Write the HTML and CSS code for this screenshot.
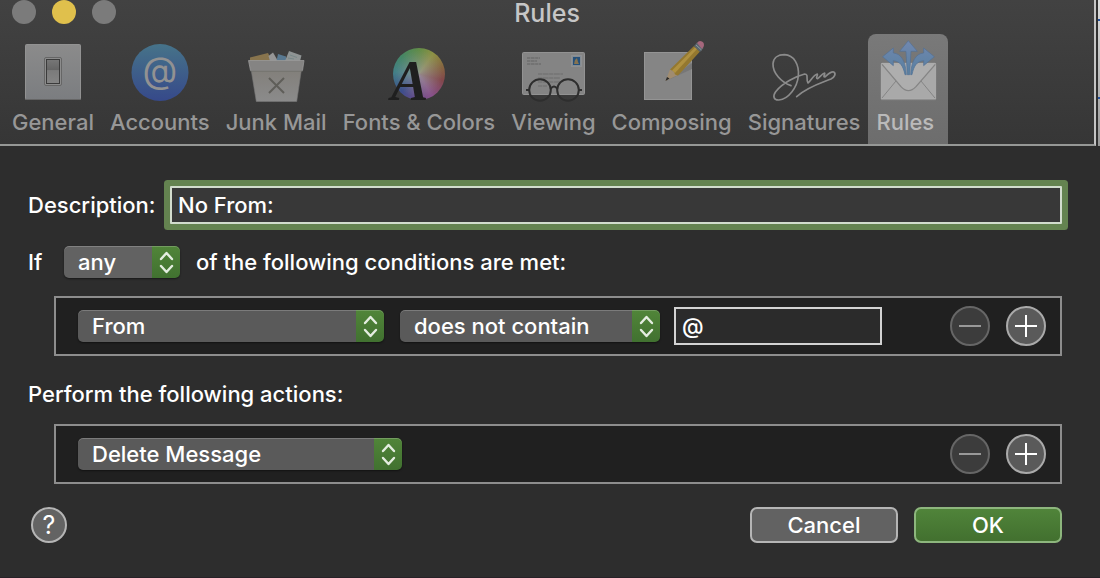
FILE: index.html
```html
<!DOCTYPE html>
<html lang="en">
<head>
  <meta charset="UTF-8">
  <meta name="viewport" content="width=device-width, initial-scale=1.0">
  <title>Rules</title>
  <link rel="stylesheet" href="styles.css">
</head>
<body>
<div class="top">
  <header class="window-header">
    <div class="titlebar">
      <div class="lights">
        <button class="light" aria-label="Close"></button>
        <button class="light minimize" aria-label="Minimize"></button>
        <button class="light" aria-label="Zoom"></button>
      </div>
      <h1>Rules</h1>
    </div>
    <nav class="toolbar">
      <button class="tab">
        <svg viewBox="0 0 64 64" aria-hidden="true">
          <defs>
            <linearGradient id="plate" x2="0" y2="1"><stop stop-color="#8b8b8b"/><stop offset="1" stop-color="#7b7d80"/></linearGradient>
            <linearGradient id="rocker" x2="0" y2="1"><stop stop-color="#777"/><stop offset=".44" stop-color="#656565"/><stop offset=".46" stop-color="#7b7b7b"/><stop offset="1" stop-color="#858585"/></linearGradient>
          </defs>
          <rect x="4.500" y="4.500" width="55" height="55" rx="1" fill="url(#plate)" stroke="#929292"/>
          <path d="M4 59.500h56" stroke="#666"/>
          <rect x="23.500" y="17.500" width="17" height="28" rx="1.500" fill="#8c8c8c" stroke="#666"/>
          <rect x="25.500" y="19.500" width="13" height="24" fill="url(#rocker)" stroke="#3b3b3b"/>
        </svg>
        <span>General</span>
      </button>
      <button class="tab">
        <svg viewBox="0 0 64 64" aria-hidden="true">
          <defs><linearGradient id="blue" x2="0" y2="1"><stop stop-color="#467389"/><stop offset="1" stop-color="#36498a"/></linearGradient></defs>
          <circle cx="32" cy="32.500" r="28.500" fill="url(#blue)"/>
          <text class="at" x="32" y="43" text-anchor="middle">@</text>
        </svg>
        <span>Accounts</span>
      </button>
      <button class="tab">
        <svg viewBox="0 0 64 64" aria-hidden="true">
          <defs><linearGradient id="bin" x2="0" y2="1"><stop stop-color="#827f7a"/><stop offset="1" stop-color="#8b8b8b"/></linearGradient></defs>
          <path d="M6 17.500L24 13l4 8H6z" fill="#88744d"/>
          <path d="M24.500 16L29 12.500 34 21h-8z" fill="#969696"/>
          <path d="M34 14l8 2.500V21h-9.500z" fill="#587890"/>
          <path d="M45 11l12.500 4.500L56 21H41z" fill="#8f9494"/>
          <path d="M46 15l7 2.500M44 18l6 1" stroke="#788"/>
          <path d="M7 29h50.500l-4.800 32.500H12.300z" fill="url(#bin)" stroke="#777" stroke-width=".6"/>
          <path d="M4.500 20.500h55.500l-1.500 10h-52z" fill="#858483" stroke="#999" stroke-width=".8"/>
          <path d="M6.500 31h52" stroke="#6d6c69"/>
          <path d="M25 38l15 15M40 38L25 53" stroke="#5f5e59" stroke-width="2"/>
        </svg>
        <span>Junk Mail</span>
      </button>
      <button class="tab">
        <svg viewBox="0 0 64 64" aria-hidden="true">
          <foreignObject x="6" y="8" width="52" height="52"><div class="color-wheel"></div></foreignObject>
          <text class="font-letter" x="4" y="60">A</text>
        </svg>
        <span>Fonts &amp; Colors</span>
      </button>
      <button class="tab">
        <svg viewBox="0 0 64 64" aria-hidden="true">
          <rect x="1.500" y="12.500" width="62" height="42" rx="1" fill="#848484" stroke="#929292"/>
          <path d="M6 18h13M6 21h10M6 24h14" stroke="#626262" stroke-dasharray="3 .6 4 .6"/>
          <path d="M17 34h25M17 38h22M17 42h23M17 46h9" stroke="#6c6c6c" stroke-dasharray="4 .6 6 .6"/>
          <rect x="50.500" y="15.500" width="10" height="11" fill="#828b93" stroke="#999" stroke-dasharray="1 1"/>
          <rect x="52" y="17" width="7" height="8" fill="#25507a"/>
          <path d="M53 24l1-4 2-2 1 4 1 2z" fill="#87734f"/>
          <g fill="none" stroke="#2e2e2e" stroke-width="2">
            <circle cx="19" cy="50" r="10.800"/><circle cx="47" cy="50" r="10.800"/>
            <path d="M29.500 49q3.500-5 7 0M5 50h4M57 50h4"/>
          </g>
        </svg>
        <span>Viewing</span>
      </button>
      <button class="tab">
        <svg viewBox="0 0 64 64" aria-hidden="true">
          <rect x="4.500" y="12.500" width="47" height="47" fill="#858585" stroke="#949494"/>
          <path d="M26 41l26-18v6z" fill="#777"/>
          <path d="M25.500 41l4.500-11.500 8 5.500z" fill="#a08c70"/>
          <path d="M25.500 41l1.500-4 2.500 1.500z" fill="#282828"/>
          <path d="M30 29.500L54 6l6 5.500L38 35.500l-3-1-1-3z" fill="#94782f"/>
          <path d="M32 30.500L55 7.500l2 1.500-22 24z" fill="#af9140"/>
          <path d="M54 6l3-3.500 6.500 5.500-3.500 4z" fill="#59656c"/>
          <path d="M56 5l5.500 5" stroke="#8f999f"/>
          <path d="M57 3q2-3 5-1.500T63.500 7L62 9z" fill="#a5677c"/>
        </svg>
        <span>Composing</span>
      </button>
      <button class="tab">
        <svg viewBox="0 0 64 64" aria-hidden="true">
          <path transform="translate(-37 -40) scale(.3333)" fill="none" stroke="#8b8b8b" stroke-width="5" stroke-linecap="round" stroke-linejoin="round" d="M168 257C138 247 113 218 114 191C115 173 130 164 148 164C178 165 193 195 190 228C187 262 160 298 132 300C115 301 113 287 122 275C142 249 182 229 209 222C222 222 212 240 219 249C228 243 234 226 247 222C250 225 240 235 248 236C256 230 262 220 269 219C272 222 262 231 270 231C278 224 286 214 296 216C304 220 299 232 288 237C255 250 215 262 185 290"/>
        </svg>
        <span>Signatures</span>
      </button>
      <button class="tab active" aria-current="page">
        <svg viewBox="0 0 64 64" aria-hidden="true">
          <defs><linearGradient id="arrow" gradientUnits="userSpaceOnUse" x1="0" y1="122" x2="0" y2="225"><stop stop-color="#7188b0"/><stop offset="1" stop-color="#577f9f"/></linearGradient></defs>
          <g transform="translate(-141 -40) scale(.3333)">
            <rect x="439" y="190" width="163" height="108" rx="2" fill="#a9a9a9" stroke="#b9b9b9" stroke-width="2"/>
            <path d="M441 294l42-51M600 294l-42-51" stroke="#858585" stroke-width="3"/>
            <path d="M441 193L498 260Q520 284 543 260L601 193" fill="#aeaeae" stroke="#858585" stroke-width="4"/>
            <path d="M439 299h163" stroke="#8d8d8d" stroke-width="3"/>
            <g fill="url(#arrow)" stroke="#536f94" stroke-width="2">
              <path d="M520 122L547 154H528L524 224H517L513 154H494z"/>
              <path d="M443 170L475 144V159C499 161 512 184 514 224H510C504 196 495 184 475 182V197z"/>
              <path d="M598 170L566 144V159C542 161 529 184 527 224H531C537 196 546 184 566 182V197z"/>
            </g>
          </g>
        </svg>
        <span>Rules</span>
      </button>
    </nav>
  </header>
  <div class="behind"></div>
</div>

<form class="sheet">
  <div class="row description">
    <label for="description">Description:</label>
    <input id="description" type="text" value="No From:">
  </div>

  <div class="row match">
    <label for="match">If</label>
    <select id="match" class="popup match-select">
      <option>any</option>
      <option>all</option>
    </select>
    <span>of the following conditions are met:</span>
  </div>

  <div class="rule-box">
    <select class="popup field-select" aria-label="Field">
      <option>From</option>
    </select>
    <select class="popup operator-select" aria-label="Operator">
      <option>does not contain</option>
    </select>
    <input class="value" type="text" value="@" aria-label="Value">
    <div class="round-buttons">
      <button type="button" class="round" aria-label="Remove condition" disabled>
        <svg viewBox="0 0 22 22"><path d="M0 11h22"/></svg>
      </button>
      <button type="button" class="round" aria-label="Add condition">
        <svg viewBox="0 0 22 22"><path d="M0 11h22M11 0v22"/></svg>
      </button>
    </div>
  </div>

  <p class="actions-title">Perform the following actions:</p>

  <div class="rule-box">
    <select class="popup action-select" aria-label="Action">
      <option>Delete Message</option>
    </select>
    <div class="round-buttons">
      <button type="button" class="round" aria-label="Remove action" disabled>
        <svg viewBox="0 0 22 22"><path d="M0 11h22"/></svg>
      </button>
      <button type="button" class="round" aria-label="Add action">
        <svg viewBox="0 0 22 22"><path d="M0 11h22M11 0v22"/></svg>
      </button>
    </div>
  </div>

  <footer class="footer">
    <button type="button" class="help" aria-label="Help">?</button>
    <button type="button" class="push">Cancel</button>
    <button type="submit" class="push default">OK</button>
  </footer>
</form>
</body>
</html>
```
FILE: styles.css
```css
* {
  box-sizing: border-box;
}

body {
  margin: 0;
  min-height: 100vh;
  display: flex;
  flex-direction: column;
  background: #2d2d2d;
  color: #fff;
  font-family: Inter, "Liberation Sans", sans-serif;
  font-size: 22px;
  font-weight: 500;
  line-height: 28px;
}

button, input, select {
  font: inherit;
  color: inherit;
  margin: 0;
}

button {
  padding: 0;
  border: none;
}

/* window header */
.top {
  display: flex;
}

.window-header {
  flex: 1;
  background: linear-gradient(#424242, #363636);
  border-right: 2px solid #c4c4c4;
  border-bottom: 2px solid #969896;
}

.titlebar {
  display: grid;
  grid-template-columns: 1fr auto 1fr;
  height: 34px;
}

.lights {
  display: flex;
  gap: 16px;
  padding-left: 12px;
}

.light {
  width: 24px;
  height: 24px;
  border-radius: 50%;
  background: #7b7b7b;
}

.minimize {
  background: #e0c04c;
}

h1 {
  margin: 0;
  font-size: 25px;
  font-weight: 500;
  line-height: 26px;
  color: #c6c6c6;
}

.toolbar {
  display: flex;
  padding-left: 4px;
}

.tab {
  display: flex;
  flex-direction: column;
  height: 110px;
  padding: 6px 8px 0;
  background: none;
  color: #979797;
  text-align: left;
  white-space: nowrap;
}

.tab svg {
  align-self: center;
  width: 64px;
  height: 64px;
  margin-bottom: 4px;
  overflow: visible;
}

.tab.active {
  border-radius: 8px 8px 0 0;
  background: linear-gradient(#797979, #6d6d6d);
  color: #bababa;
}

.at {
  font-size: 36px;
  font-weight: 400;
  fill: #929292;
}

.color-wheel {
  height: 100%;
  border-radius: 50%;
  background:
    radial-gradient(circle, #999c 0%, #9990 65%),
    conic-gradient(#618c49, #8d9145 35deg, #866441 75deg, #82474b 105deg, #88528b 150deg, #6a4c89 185deg, #3d4e8c 225deg, #438087 275deg, #458666 315deg, #618c49);
}

.font-letter {
  font-family: "Liberation Serif", serif;
  font-size: 56px;
  font-style: italic;
  font-weight: bold;
  fill: #1f1f1f;
}

/* strip of the window underneath */
.behind {
  width: 4px;
  border-left: 2px solid #303030;
  background:
    linear-gradient(#2553a0, #2553a0) 0 19px / 4px 2px no-repeat,
    linear-gradient(#2553a0, #2553a0) 0 97px / 4px 2px no-repeat,
    linear-gradient(#ddd, #999);
}

/* rule sheet */
.sheet {
  flex: 1;
  padding: 40px 38px 34px 28px;
  border-bottom: 1px solid #272127;
}

.row {
  display: flex;
  align-items: center;
}

.description label {
  flex: 0 0 142px;
}

.description input {
  flex: 1;
  min-width: 0;
  height: 38px;
  padding: 0 6px;
  border: 2px solid #d2dccd;
  border-radius: 1px;
  outline: none;
  background: #383838;
  box-shadow: 0 0 0 6px #648350;
}

.match {
  margin: 22px 0 18px;
}

.match label {
  width: 36px;
}

.match span {
  margin-left: 16px;
}

.popup {
  appearance: none;
  height: 32px;
  padding: 0 36px 0 14px;
  border: none;
  border-radius: 5px;
  background:
    url("data:image/svg+xml,%3Csvg xmlns='http://www.w3.org/2000/svg' width='28' height='32' fill='none' stroke='%23e4ede0' stroke-width='2.4' stroke-linecap='round' stroke-linejoin='round'%3E%3Cpath d='M9 13l5.500-6 5.500 6M9 20l5.500 6 5.500-6'/%3E%3C/svg%3E") right / 28px 32px no-repeat,
    linear-gradient(#518539, #417130) right / 28px 100% no-repeat,
    #5a5a5a;
  box-shadow: inset 0 1px #ffffff33, 0 1px 2px #0007;
}

.match-select {
  width: 116px;
  background-color: #626262;
}

.field-select {
  width: 306px;
}

.operator-select {
  width: 260px;
}

.action-select {
  width: 324px;
}

.rule-box {
  display: flex;
  align-items: center;
  height: 60px;
  margin-left: 26px;
  padding: 0 14px 0 22px;
  border: 2px solid #8d8d8d;
  background: #202020;
}

.operator-select {
  margin: 0 14px 0 16px;
}

.value {
  width: 208px;
  height: 38px;
  padding: 0 6px;
  border: 2px solid #d2d2d2;
  background: #2b2b2b;
}

.round-buttons {
  display: flex;
  gap: 16px;
  margin-left: auto;
}

.round {
  display: grid;
  place-items: center;
  width: 40px;
  height: 40px;
  border: 2px solid #aaa;
  border-radius: 50%;
  background: #5a5a5a;
}

.round:disabled {
  border-color: #666;
  background: #3c3c3c;
  color: #999;
}

.round svg {
  width: 22px;
  height: 22px;
  fill: none;
  stroke: currentColor;
  stroke-width: 2;
}

.actions-title {
  margin: 24px 0 16px;
}

.footer {
  display: flex;
  align-items: center;
  gap: 16px;
  margin-top: 23px;
  padding-left: 3px;
}

.help {
  width: 36px;
  height: 36px;
  margin-right: auto;
  border: 2px solid #b5b5b5;
  border-radius: 50%;
  background: #636363;
  font-size: 25px;
  font-weight: 400;
}

.push {
  width: 148px;
  height: 36px;
  border: 2px solid #b5b5b5;
  border-radius: 7px;
  background: #626262;
}

.push.default {
  border-color: #8db67d;
  background: linear-gradient(#50843a, #42702f);
}
```
